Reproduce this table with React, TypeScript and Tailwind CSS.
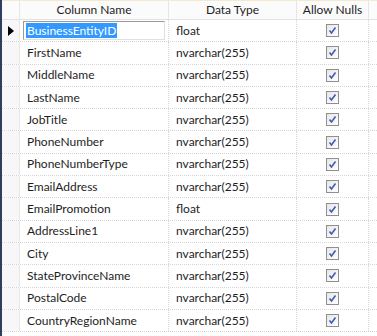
const rows: [string, string][] = [
  ["BusinessEntityID", "float"],
  ["FirstName", "nvarchar(255)"],
  ["MiddleName", "nvarchar(255)"],
  ["LastName", "nvarchar(255)"],
  ["JobTitle", "nvarchar(255)"],
  ["PhoneNumber", "nvarchar(255)"],
  ["PhoneNumberType", "nvarchar(255)"],
  ["EmailAddress", "nvarchar(255)"],
  ["EmailPromotion", "float"],
  ["AddressLine1", "nvarchar(255)"],
  ["City", "nvarchar(255)"],
  ["StateProvinceName", "nvarchar(255)"],
  ["PostalCode", "nvarchar(255)"],
  ["CountryRegionName", "nvarchar(255)"],
]

function Check() {
  return (
    <div className="flex h-[13px] w-[13px] items-center justify-center border border-[#8f8f8f] bg-gradient-to-br from-[#e6e6e6] to-white">
      <svg width="9" height="9" viewBox="0 0 9 9">
        <path d="M1.5 4.5 L3.5 7 L7.5 1.5" fill="none" stroke="#3c5bb4" strokeWidth="1.6" />
      </svg>
    </div>
  )
}

export default function App() {
  return (
    <div
      className="flex h-[336px] w-[377px] overflow-hidden bg-white text-[12px] text-[#1e1e1e]"
      style={{ fontFamily: "Lato, 'Noto Sans', sans-serif" }}
    >
      <div className="w-[2px] shrink-0 bg-[#2e3d60]" />
      <div className="flex-1">
        <div className="flex h-[20px] border-t border-t-[#f4ead0] border-b border-b-[#e2e2e2] bg-[#fbfbfb]">
          <div className="w-[18px] shrink-0 border-r border-[#e6e6e6]" />
          <div className="flex w-[149px] items-center justify-center border-r border-[#e6e6e6]">Column Name</div>
          <div className="flex w-[128px] items-center justify-center border-r border-[#e6e6e6]">Data Type</div>
          <div className="flex w-[72px] items-center justify-center border-r border-[#e6e6e6]">Allow Nulls</div>
        </div>
        {rows.map(([name, type], i) => (
          <div key={name} className="flex h-[22.3px] border-b border-dotted border-[#d6d6d6]">
            <div className="flex w-[18px] shrink-0 items-center justify-center border-r border-[#e6e6e6] bg-[#f7f7f7]">
              {i === 0 && (
                <svg width="6" height="10" viewBox="0 0 6 10">
                  <path d="M0 0 L6 5 L0 10 Z" fill="#000" />
                </svg>
              )}
            </div>
            <div className="flex w-[149px] items-center border-r border-dotted border-[#d6d6d6] px-[3px]">
              {i === 0 ? (
                <div className="flex h-[19px] w-full items-center border border-[#9a9a9a] border-r-[#e0e0e0] border-b-[#e0e0e0] px-[2px]">
                  <span className="bg-[#3399ff] px-px leading-[15px] text-white">{name}</span>
                </div>
              ) : (
                <span className="pl-[4px]">{name}</span>
              )}
            </div>
            <div className="flex w-[128px] items-center border-r border-dotted border-[#d6d6d6] pl-[7px]">{type}</div>
            <div className="flex w-[72px] items-center justify-center border-r border-dotted border-[#d6d6d6]">
              <Check />
            </div>
          </div>
        ))}
      </div>
    </div>
  )
}
